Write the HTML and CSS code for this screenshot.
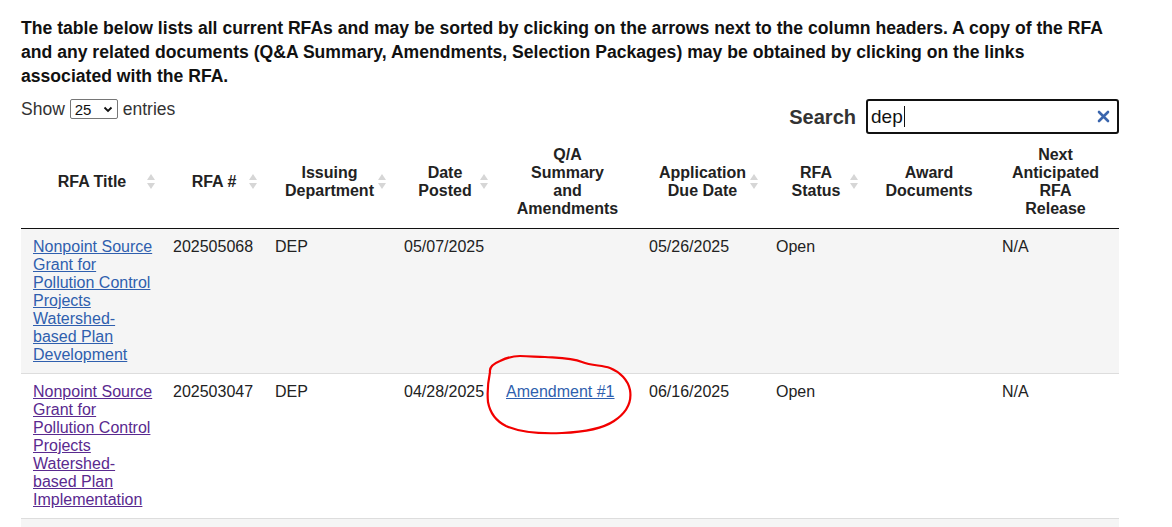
FILE: index.html
```html
<!DOCTYPE html>
<html lang="en">
<head>
<meta charset="utf-8">
<title>RFAs</title>
<link rel="stylesheet" href="styles.css">
</head>
<body>
<div class="page">
  <p class="intro">The table below lists all current RFAs and may be sorted by clicking on the arrows next to the column headers. A copy of the RFA<br>and any related documents (Q&amp;A Summary, Amendments, Selection Packages) may be obtained by clicking on the links<br>associated with the RFA.</p>

  <div class="controls">
    <div class="length">
      <span>Show</span>
      <span class="select">25
        <svg class="chev" width="10" height="7" viewBox="0 0 10 7"><path d="M1.5 1.5 L5 5 L8.5 1.5" fill="none" stroke="#111" stroke-width="1.8"/></svg>
      </span>
      <span>entries</span>
    </div>
    <div class="filter">
      <span class="search-label">Search</span>
      <div class="search-box">
        <span class="search-text">dep</span><span class="caret"></span>
        <svg class="clear" width="13" height="13" viewBox="0 0 13 13"><path d="M2 2 L11 11 M11 2 L2 11" stroke="#3a65ad" stroke-width="2.6" stroke-linecap="round"/></svg>
      </div>
    </div>
  </div>

  <div class="table-wrap">
  <table class="rfa">
    <colgroup>
      <col class="c1"><col class="c2"><col class="c3"><col class="c4"><col class="c5"><col class="c6"><col class="c7"><col class="c8"><col class="c9">
    </colgroup>
    <thead>
      <tr>
        <th class="sort">RFA Title</th>
        <th class="sort">RFA #</th>
        <th class="sort">Issuing Department</th>
        <th class="sort">Date Posted</th>
        <th class="narrow">Q/A Summary and Amendments</th>
        <th class="sort">Application Due Date</th>
        <th class="sort">RFA Status</th>
        <th>Award Documents</th>
        <th>Next Anticipated RFA Release</th>
      </tr>
    </thead>
    <tbody>
      <tr class="odd">
        <td class="first"><a href="#" class="link">Nonpoint Source Grant for Pollution Control Projects Watershed-based Plan Development</a></td>
        <td>202505068</td>
        <td>DEP</td>
        <td>05/07/2025</td>
        <td></td>
        <td>05/26/2025</td>
        <td>Open</td>
        <td></td>
        <td>N/A</td>
      </tr>
      <tr class="even">
        <td class="first"><a href="#" class="link visited">Nonpoint Source Grant for Pollution Control Projects Watershed-based Plan Implementation</a></td>
        <td>202503047</td>
        <td>DEP</td>
        <td>04/28/2025</td>
        <td><a href="#" class="link">Amendment #1</a></td>
        <td>06/16/2025</td>
        <td>Open</td>
        <td></td>
        <td>N/A</td>
      </tr>
      <tr class="odd">
        <td>&nbsp;</td><td></td><td></td><td></td><td></td><td></td><td></td><td></td><td></td>
      </tr>
    </tbody>
  </table>
  <svg class="annot" width="160" height="90" viewBox="480 350 160 90">
    <path d="M490 372 C489 366 495 363 500 361 C506 358 512 356 520 356 C530 356 537 357 545 357 C560 358 572 358 582 362 C592 366 602 365 610 368 C620 372 628 380 630 390 C632 402 626 413 614 421 C602 429 586 432 562 433 C540 434 520 432 506 426 C496 421 490 413 488 402 C487 392 488 382 490 372 Z" fill="none" stroke="#f20000" stroke-width="2.2" stroke-linejoin="round"/>
  </svg>
  </div>
</div>
</body>
</html>
```

FILE: styles.css
```css
html, body {
  margin: 0;
  padding: 0;
  background: #fff;
}

body {
  font-family: "Liberation Sans", Arial, sans-serif;
  color: #222;
}

.page {
  width: 1098px;
  margin-left: 21px;
  padding-top: 16px;
}

.intro {
  margin: 0;
  font-size: 17.6px;
  font-weight: bold;
  line-height: 24px;
  color: #111;
  white-space: nowrap;
}

.controls {
  display: flex;
  justify-content: space-between;
  align-items: flex-start;
  margin-top: 11px;
}

.length {
  display: flex;
  align-items: center;
  gap: 5px;
  font-size: 17.5px;
  color: #333;
  height: 20px;
}

.select {
  display: inline-flex;
  align-items: center;
  justify-content: space-between;
  width: 38px;
  height: 18px;
  padding: 0 4px;
  border: 1px solid #767676;
  border-radius: 2px;
  font-size: 15px;
  color: #111;
  background: #fff;
}

.chev {
  display: block;
}

.filter {
  display: flex;
  align-items: center;
  gap: 10px;
}

.search-label {
  font-size: 20px;
  font-weight: bold;
  color: #333;
  padding-top: 1px;
}

.search-box {
  position: relative;
  display: flex;
  align-items: center;
  width: 246px;
  height: 31px;
  border: 2px solid #111;
  border-radius: 3px;
  padding-left: 3px;
  font-size: 19px;
  color: #111;
}

.caret {
  display: inline-block;
  width: 1px;
  height: 21px;
  background: #111;
  margin-left: 1px;
}

.clear {
  position: absolute;
  right: 7px;
  top: 9px;
}

.table-wrap {
  position: relative;
  margin-top: 2px;
}

.rfa {
  width: 1098px;
  border-collapse: collapse;
  table-layout: fixed;
  font-size: 16px;
  line-height: 18px;
}

.c1 { width: 142px; }
.c2 { width: 102px; }
.c3 { width: 129px; }
.c4 { width: 102px; }
.c5 { width: 143px; }
.c6 { width: 127px; }
.c7 { width: 100px; }
.c8 { width: 126px; }
.c9 { width: 127px; }

.rfa th {
  position: relative;
  padding: 10px 18px;
  font-weight: bold;
  text-align: center;
  vertical-align: middle;
  color: #222;
  border-bottom: 1px solid #111;
}

.rfa th.narrow {
  padding-left: 20px;
  padding-right: 20px;
}

.rfa th.sort::before,
.rfa th.sort::after {
  content: "";
  position: absolute;
  right: 8px;
  width: 0;
  height: 0;
  border-left: 4px solid transparent;
  border-right: 4px solid transparent;
}

.rfa th.sort::before {
  top: calc(50% - 8px);
  border-bottom: 6px solid #d6d6d6;
}

.rfa th.sort::after {
  top: calc(50% + 1px);
  border-top: 6px solid #d6d6d6;
}

.rfa td {
  padding: 9px 10px 9px;
  vertical-align: top;
  color: #222;
  border-bottom: 1px solid #ddd;
}

.rfa td.first {
  padding-left: 12px;
}

.rfa tr.odd td {
  background: #f5f5f5;
}

.rfa tr.even td {
  background: #fff;
}

.link {
  color: #2f5fae;
  text-decoration: underline;
}

.link.visited {
  color: #5a2a8f;
}

.annot {
  position: absolute;
  left: 459px;
  top: 214px;
  pointer-events: none;
}
```
